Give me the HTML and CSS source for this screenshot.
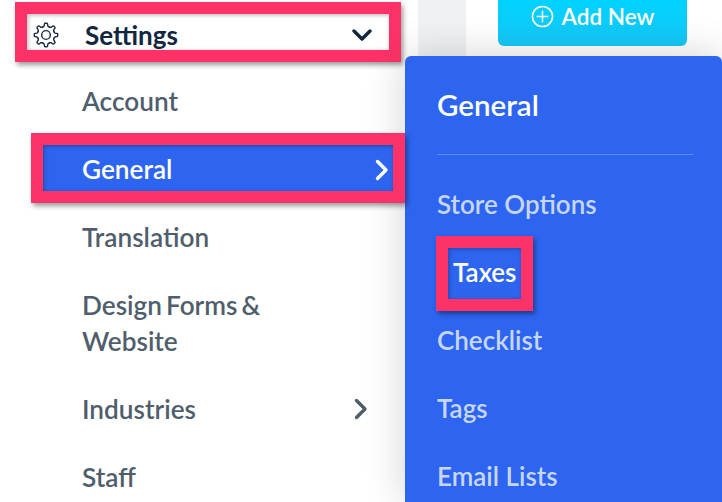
FILE: index.html
```html
<!DOCTYPE html>
<html lang="en">
<head>
    <meta charset="UTF-8">
    <title>Settings</title>
    <link rel="stylesheet" href="styles.css">
</head>
<body>
    <div class="page">
        <div class="sidebar">
            <div class="settings-row highlight">
                <svg class="gear" viewBox="0 0 24 24">
                    <defs>
                        <path id="tooth" d="M8.94 4.61Q10 4.2 10.3 3.6L10.6 1.7Q10.7 1.2 11.2 1.2H12.8Q13.3 1.2 13.4 1.7L13.7 3.6Q14 4.2 15.06 4.61"/>
                    </defs>
                    <use href="#tooth"/>
                    <use href="#tooth" transform="rotate(45 12 12)"/>
                    <use href="#tooth" transform="rotate(90 12 12)"/>
                    <use href="#tooth" transform="rotate(135 12 12)"/>
                    <use href="#tooth" transform="rotate(180 12 12)"/>
                    <use href="#tooth" transform="rotate(225 12 12)"/>
                    <use href="#tooth" transform="rotate(270 12 12)"/>
                    <use href="#tooth" transform="rotate(315 12 12)"/>
                    <circle cx="12" cy="12" r="4"/>
                </svg>
                <span class="settings-label">Settings</span>
                <svg class="chevron-down" viewBox="0 0 20 12"><path d="M2 2l8 8 8-8"/></svg>
            </div>
            <ul class="menu">
                <li class="menu-item">Account</li>
                <li class="menu-item active highlight">
                    General
                    <svg class="chevron" viewBox="0 0 14 22"><path d="M2.5 2.5l8.500 8.500-8.500 8.500"/></svg>
                </li>
                <li class="menu-item">Translation</li>
                <li class="menu-item">Design Forms &amp;<br>Website</li>
                <li class="menu-item has-sub">
                    Industries
                    <svg class="chevron" viewBox="0 0 14 22"><path d="M2.500 2.500l8.500 8.500-8.500 8.500"/></svg>
                </li>
                <li class="menu-item">Staff</li>
            </ul>
        </div>
        <div class="topbar">
            <div class="strip"></div>
            <button class="add-new">
                <svg class="plus" viewBox="0 0 24 24"><circle cx="12" cy="12" r="10.500"/><path d="M12 6v12M6 12h12"/></svg>
                Add New
            </button>
        </div>
        <div class="flyout">
            <h2 class="flyout-title">General</h2>
            <ul class="flyout-list">
                <li class="flyout-item">Store Options</li>
                <li class="flyout-item current highlight">Taxes</li>
                <li class="flyout-item">Checklist</li>
                <li class="flyout-item">Tags</li>
                <li class="flyout-item">Email Lists</li>
            </ul>
        </div>
    </div>
</body>
</html>
```

FILE: styles.css
```css
* {
    margin: 0;
    padding: 0;
    box-sizing: border-box;
    font-family: Lato, "Noto Sans", sans-serif;
}

body {
    background-color: #fff;
}

.page {
    position: relative;
    display: flex;
    width: 722px;
    height: 502px;
    overflow: hidden;
}

.highlight {
    border: 12px solid #fd3268;
    box-shadow: 2px 3px 5px rgba(0,0,0,0.4), inset 1px 1px 4px rgba(0,0,0,0.3);
}

/* left menu */
.sidebar {
    flex: none;
    width: 405px;
    padding-top: 2px;
}

.settings-row {
    display: flex;
    align-items: center;
    width: 386px;
    height: 60px;
    margin-left: 15px;
    padding: 5px 17px 0 6px;
    background-color: #fff;
}

.gear {
    flex: none;
    width: 26px;
    height: 26px;
    fill: none;
    stroke: #1a2b44;
    stroke-width: 1.3;
    stroke-linecap: round;
}

.settings-label {
    flex: 1;
    margin-left: 26px;
    font-size: 26px;
    font-weight: 700;
    color: #12263f;
}

.chevron-down {
    width: 20px;
    height: 12px;
    fill: none;
    stroke: #12263f;
    stroke-width: 3.4;
    stroke-linecap: round;
    stroke-linejoin: round;
}

.menu {
    list-style: none;
    margin-top: 5px;
}

.menu-item {
    position: relative;
    padding: 16px 0 16px 82px;
    font-size: 26.2px;
    font-weight: 600;
    line-height: 36px;
    word-spacing: -2.5px;
    color: #4f5e6c;
}

.menu-item.active {
    z-index: 2;
    width: 374px;
    height: 70px;
    margin: -2px 0 0 31px;
    padding: 6px 0 0 39px;
    background-color: #2d65f0;
    color: #fff;
}

.chevron {
    position: absolute;
    width: 14px;
    height: 22px;
    fill: none;
    stroke: #4f5e6c;
    stroke-width: 3.4;
    stroke-linecap: round;
    stroke-linejoin: round;
}

.active .chevron {
    top: 14px;
    right: 4px;
    stroke: #fff;
}

.has-sub .chevron {
    top: 23px;
    left: 354px;
}

/* top right bits */
.topbar {
    display: flex;
    align-items: flex-start;
    flex: 1;
    height: 56px;
}

.strip {
    width: 48px;
    height: 56px;
    margin-left: 13px;
    background-color: #eef2f5;
}

.add-new {
    display: flex;
    align-items: center;
    justify-content: center;
    gap: 8px;
    width: 189px;
    height: 46px;
    margin-left: 32px;
    padding-bottom: 14px;
    border: none;
    border-radius: 0 0 6px 6px;
    background: linear-gradient(#00d2ff, #18c8f8);
    color: #fff;
    font-size: 22.5px;
    font-weight: 600;
}

.plus {
    width: 23px;
    height: 23px;
    fill: none;
    stroke: #fff;
    stroke-width: 1.6;
}

/* flyout panel over the page */
.flyout {
    position: absolute;
    top: 56px;
    left: 405px;
    right: 0;
    bottom: 0;
    padding: 31px 29px 0 32px;
    border-radius: 6px 6px 0 0;
    background-color: #2d65f0;
    box-shadow: 0 0 40px rgba(0,0,0,0.18);
}

.flyout-title {
    padding-bottom: 31px;
    border-bottom: 1px solid rgba(255,255,255,0.25);
    font-size: 29.5px;
    font-weight: 600;
    line-height: 36px;
    color: #fff;
}

.flyout-list {
    list-style: none;
    margin-top: 15px;
}

.flyout-item {
    padding: 16px 0;
    font-size: 26px;
    font-weight: 600;
    line-height: 36px;
    color: #c7d6fb;
}

.flyout-item.current {
    width: 97px;
    height: 75px;
    margin: -2px 0 -5px -1px;
    padding: 6px 0 0 5px;
    color: #fff;
}
```
